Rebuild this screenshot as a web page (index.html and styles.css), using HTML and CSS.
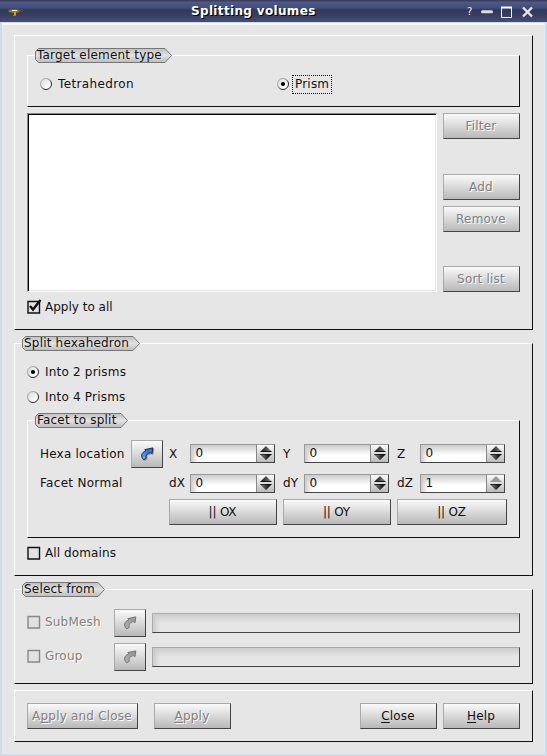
FILE: index.html
```html
<!DOCTYPE html>
<html lang="en">
<head>
<meta charset="utf-8">
<title>Splitting volumes</title>
<link rel="stylesheet" href="styles.css">
</head>
<body>
<svg width="0" height="0" class="defs">
  <defs>
    <linearGradient id="tab" x1="0" y1="0" x2="0" y2="1"><stop offset="0" stop-color="#c0c0c0"/><stop offset=".5" stop-color="#e2e2e2"/><stop offset="1" stop-color="#bcbcbc"/></linearGradient>
    <linearGradient id="up" x1="0" y1="0" x2="1" y2="0"><stop offset="0" stop-color="#111"/><stop offset="1" stop-color="#888"/></linearGradient>
    <linearGradient id="down" x1="0" y1="0" x2="1" y2="0"><stop offset="0" stop-color="#888"/><stop offset=".8" stop-color="#111"/></linearGradient>
    <linearGradient id="blue" x1="0" y1="0" x2="0" y2="1"><stop offset="0" stop-color="#1f62c4"/><stop offset="1" stop-color="#6db2fa"/></linearGradient>
    <linearGradient id="ball" x1="0" y1="0" x2="1" y2="1"><stop offset="0" stop-color="#d8d8d8"/><stop offset=".8" stop-color="#fff"/></linearGradient>
    <linearGradient id="rim" x1="0" y1="0" x2="1" y2="1"><stop offset=".3" stop-color="#aaa"/><stop offset=".65" stop-color="#222"/></linearGradient>
    <symbol id="radio" viewBox="0 0 12 12"><circle cx="6" cy="6" r="5.5" fill="url(#ball)" stroke="url(#rim)"/></symbol>
    <symbol id="arrow" viewBox="0 0 14 14"><path d="M3.6 12.8C.4 9.6 1.2 5.4 5.8 3.9L4.8 2.6L12.8.9L12 6.6L10.2 5.6C6.6 6.6 5.4 8.6 6.3 11.2Z"/></symbol>
    <symbol id="spin" viewBox="0 0 12 16"><path class="u" d="M6 1L11.5 6.5H.5Z"/><path class="bar" d="M.5 6.5H11.5"/><path stroke="#111" d="M.5 9.5H11.5"/><path fill="url(#down)" stroke="#111" stroke-width=".5" d="M.8 9.5H11.2L6 14.8Z"/></symbol>
  </defs>
</svg>
<header class="titlebar">
  <svg class="app-icon" width="16" height="10" viewBox="0 0 16 10"><path d="M0 3L3 1.5H10L12 3L10 4.5H8V8H5V7H6V5L1 4Z" fill="#a77818"/><path d="M4 2.5H9" stroke="#fff0b0"/><path d="M7 4V7" stroke="#f5c449"/><circle cx="13.5" cy="2.5" r="1.2" fill="none" stroke="#5d503f"/></svg>
  <h1>Splitting volumes</h1>
  <span class="question">?</span>
  <svg class="controls" width="54" height="12" viewBox="0 0 54 12"><path d="M2.5 5.8H11.5" stroke="#ddd" stroke-width="3" stroke-linecap="round"/><path d="M21.5 1.5H31.5V11.5H21.5Z" fill="none" stroke="#f4f4f4"/><path d="M21 1.5H32" stroke="#fff" stroke-width="2"/><path d="M43 1.5L52 10.5M52 1.5L43 10.5" stroke="#e6e6e6" stroke-width="2.4"/></svg>
</header>
<main class="dialog">
  <section class="frame source">
    <section class="frame target">
      <div class="legend"><svg width="137" height="15"><path d="M3.5.5H130L136.5 7.5L130 14.5H3.5L.5 11.5V3.5Z"/></svg><span>Target element type</span></div>
      <label class="choice tetra"><svg class="radio"><use href="#radio"/></svg><span>Tetrahedron</span></label>
      <label class="choice"><svg class="radio"><use href="#radio"/><circle cx="6" cy="6" r="2.1"/></svg><span class="focus">Prism</span></label>
    </section>
    <div class="selection">
      <div class="list"></div>
      <div class="tools">
        <button class="btn off">Filter</button>
        <button class="btn off add">Add</button>
        <button class="btn off remove">Remove</button>
        <button class="btn off sort">Sort list</button>
      </div>
    </div>
    <label class="choice all"><svg class="check" width="15" height="15"><path d="M1 2.5H12.5V14H1Z"/><path class="tick" d="M3 7L6 10.5L13.5 1"/></svg><span>Apply to all</span></label>
  </section>

  <section class="frame split">
    <div class="legend outer"><svg width="118" height="15"><path d="M3.5.5H111L117.5 7.5L111 14.5H3.5L.5 11.5V3.5Z"/></svg><span>Split hexahedron</span></div>
    <label class="choice two"><svg class="radio"><use href="#radio"/><circle cx="6" cy="6" r="2.1"/></svg><span>Into 2 prisms</span></label>
    <label class="choice four"><svg class="radio"><use href="#radio"/></svg><span>Into 4 Prisms</span></label>
    <section class="frame facet">
      <div class="legend"><svg width="93" height="15"><path d="M3.5.5H86L92.5 7.5L86 14.5H3.5L.5 11.5V3.5Z"/></svg><span>Facet to split</span></div>
      <div class="coords location">
        <span>Hexa location</span><button class="btn pick"><svg class="arrow"><use href="#arrow"/></svg></button>
        <span>X</span><div class="spin"><b>0</b><i><svg><use href="#spin"/></svg></i></div>
        <span>Y</span><div class="spin"><b>0</b><i><svg><use href="#spin"/></svg></i></div>
        <span>Z</span><div class="spin"><b>0</b><i><svg><use href="#spin"/></svg></i></div>
      </div>
      <div class="coords normal">
        <span>Facet Normal</span><span></span>
        <span>dX</span><div class="spin"><b>0</b><i><svg><use href="#spin"/></svg></i></div>
        <span>dY</span><div class="spin"><b>0</b><i><svg><use href="#spin"/></svg></i></div>
        <span>dZ</span><div class="spin max"><b>1</b><i><svg><use href="#spin"/></svg></i></div>
      </div>
      <div class="axes"><button class="btn">|| OX</button><button class="btn">|| OY</button><button class="btn">|| OZ</button></div>
    </section>
    <label class="choice domains"><svg class="check" width="15" height="15"><path d="M1 2.5H12.5V14H1Z"/></svg><span>All domains</span></label>
  </section>

  <section class="frame from">
    <div class="legend outer"><svg width="83" height="15"><path d="M3.5.5H76L82.5 7.5L76 14.5H3.5L.5 11.5V3.5Z"/></svg><span>Select from</span></div>
    <div class="source-row"><label class="choice off"><svg class="check" width="15" height="15"><path d="M1 2.5H12.5V14H1Z"/></svg><span>SubMesh</span></label><button class="btn pick off"><svg class="arrow"><use href="#arrow"/></svg></button><div class="field"></div></div>
    <div class="source-row"><label class="choice off"><svg class="check" width="15" height="15"><path d="M1 2.5H12.5V14H1Z"/></svg><span>Group</span></label><button class="btn pick off"><svg class="arrow"><use href="#arrow"/></svg></button><div class="field"></div></div>
  </section>

  <footer class="frame actions">
    <button class="btn off wide">A<u>p</u>ply and Close</button><button class="btn off"><u>A</u>pply</button><button class="btn close"><u>C</u>lose</button><button class="btn help"><u>H</u>elp</button>
  </footer>
</main>
</body>
</html>
```
FILE: styles.css
```css
* { box-sizing: border-box; }
body { margin: 0; width: 547px; height: 756px; overflow: hidden; background: #e6e6e6; color: #111; font: 12px/16px "DejaVu Sans", sans-serif; letter-spacing: .2px; }
svg { display: block; flex: none; }
.defs { position: absolute; }
.titlebar { height: 22px; display: flex; align-items: center; padding: 0 13px 0 8px; color: #fff; background: linear-gradient(#3c3e5c 0, #3c3e5c 1px, #4b5b8c 2px, #414c78 8px, #30385a 10px, #383e61 15px, #454e76 22px); }
.app-icon { margin-top: 4px; }
h1 { margin: 0 0 0 167px; width: 276px; font-size: 12px; line-height: 22px; letter-spacing: .34px; text-shadow: 1px 1px #000; }
.question { width: 13px; font-size: 10px; color: #eee; margin-top: 1px; }
.controls { margin-top: 2px; }
.dialog { height: 734px; padding: 11px 12px 0 12px; border: 2px solid #d0dbe5; border-top-width: 1px; box-shadow: inset 0 2px #f9fafb, inset 1px 0 #e2ebf3, inset -1px 0 #e2ebf3, inset 0 -1px #e2ebf3; }
.frame { position: relative; border: 1px solid #111; border-top-color: #fff; border-left-color: #fff; }
.source { height: 295px; margin-top: 1px; width: 519px; padding: 19px 12px 0; }
.target { width: 493px; height: 52px; display: flex; padding: 20px 0 0 12px; }
.legend { position: absolute; left: 7px; top: -8px; height: 15px; }
.legend svg path { fill: url(#tab); stroke: #777; }
.legend span { position: absolute; left: 2px; top: -1px; white-space: nowrap; }
.choice { display: flex; align-items: center; height: 16px; }
.choice > span { margin-left: 6px; white-space: nowrap; }
.radio { width: 12px; height: 12px; }
.tetra { width: 237px; letter-spacing: .36px; }
.target .choice > .focus { margin: 1px 0 0 4px; outline: 1px dotted #111; padding: 0 2px 0 2px; height: 17px; line-height: 16px; }
.selection { display: flex; gap: 6px; margin-top: 6px; }
.list { width: 410px; height: 179px; background: #fff; border: 1px solid; border-color: #888 #fff #fff #888; box-shadow: inset 1px 1px #000, inset -1px -1px #e6e6e6; }
.tools { display: flex; flex-direction: column; }
.btn { appearance: none; display: block; flex: none; width: 77px; height: 26px; border: 1px solid #444; border-top-color: #aaa; border-left-color: #aaa; border-radius: 0; padding: 0 1px 1px 0; margin: 0; font: inherit; letter-spacing: inherit; color: #111; background: linear-gradient(#fafafa, #e0e0e0 40%, #b8b8b8); text-align: center; }
.btn.off, .choice.off { color: #808080; text-shadow: 1px 1px #fff; }
.add { margin-top: 35px; }
.remove { margin-top: 6px; }
.sort { margin-top: 34px; }
.all { margin-top: 7px; letter-spacing: 0; }
.check { fill: #e2e2e2; stroke: #111; margin-top: -1px; margin-right: -3px; }
.check path:first-child { stroke-width: 1.4; }
.check .tick { fill: none; stroke-width: 2.4; }
.off .check { stroke: #888; }
.source-row .check { margin-top: 0; }
.split { width: 519px; height: 233px; margin-top: 13px; padding: 20px 12px 0; }
.four { margin-top: 9px; }
.facet { width: 493px; height: 118px; margin-top: 15px; padding-top: 19px; }
.coords { display: grid; grid-template-columns: 91px 38px 21px 85px 29px 85px 31px 85px; padding-left: 12px; align-items: center; height: 28px; }
.coords > span { white-space: nowrap; }
.coords > span:nth-of-type(n+3) { padding-left: 8px; }
.location > span:nth-of-type(2), .normal > span:nth-of-type(3) { padding-left: 0; }
.normal > span:first-child { letter-spacing: .3px; }
.btn.pick { width: 32px; height: 28px; display: flex; align-items: center; justify-content: center; }
.arrow { width: 14px; height: 14px; overflow: visible; fill: url(#blue); stroke: #1b2b42; stroke-width: 1; filter: drop-shadow(1px 1px .5px #999); }
.off .arrow { filter: grayscale(1) opacity(.6); }
.spin { width: 85px; height: 19px; display: flex; border: 1px solid #444; border-top-color: #999; border-left-color: #999; background: linear-gradient(90deg, #ccc, transparent 7px), linear-gradient(#ccc, #fff 10px); }
.location .spin { margin-bottom: 1px; }
.spin b { flex: 1; padding-left: 4.5px; line-height: 16px; font-weight: normal; }
.spin i { width: 18px; padding: 0 2px 0 3px; border-left: 1px solid #888; background: linear-gradient(#fafafa, #bbb); }
.spin svg { width: 12px; height: 16px; fill: url(#up); stroke-width: 1; --bar: #111; }
.bar { stroke: var(--bar, #111); }
.spin.max svg { fill: #999; --bar: #999; }
.normal { height: 28px; margin-top: 1px; }
.axes { display: flex; gap: 6px; margin: 2px 0 0 141px; letter-spacing: -.2px; }
.axes .btn { width: 108px; }
.axes .btn:last-child { width: 110px; }
.domains { margin-top: 7px; letter-spacing: .1px; }
.from { width: 519px; height: 95px; margin-top: 13px; padding: 19px 12px 0; }
.source-row { display: flex; margin-bottom: 6px; }
.source-row .choice { width: 87px; height: 25px; }
.field { width: 368px; height: 20px; margin: 4px 0 0 6px; border: 1px solid #444; border-top-color: #aaa; border-left-color: #aaa; background: linear-gradient(90deg, #ccc, transparent 7px), linear-gradient(#ccc, #e6e6e6 9px); }
.actions { width: 519px; height: 52px; margin-top: 6px; display: flex; padding: 12px; }
.actions .wide { width: 111px; margin-right: 16px; }
.actions .close { margin-left: 129px; }
.actions .help { margin-left: 6px; }
u { text-decoration: underline; text-underline-offset: 2px; text-decoration-skip-ink: none; }
```
